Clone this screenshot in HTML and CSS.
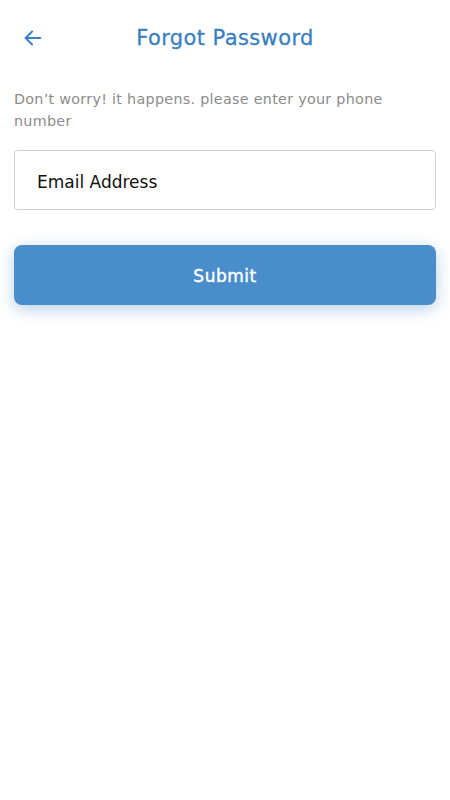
FILE: index.html
```html
<!DOCTYPE html>
<html lang="en">
<head>
    <meta charset="UTF-8">
    <title>Forgot Password</title>
    <meta name="viewport" content="width=device-width, initial-scale=1.0">
    <link rel="stylesheet" href="styles.css">
</head>
<body>
    <div class="screen">
        <header class="topbar">
            <a href="#" class="back">
                <svg width="22" height="22" viewBox="0 0 24 24" fill="none" stroke="#3b82c4" stroke-width="2.2" stroke-linecap="round" stroke-linejoin="round">
                    <path d="M20 12H4"/>
                    <path d="M11 5l-7 7 7 7"/>
                </svg>
            </a>
            <h1>Forgot Password</h1>
        </header>

        <p class="hint">Don’t worry! it happens. please enter your phone number</p>

        <form class="form">
            <input type="text" class="field" placeholder="Email Address">
            <button type="button" class="submit">Submit</button>
        </form>
    </div>
</body>
</html>
```

FILE: styles.css
```css
* {
    box-sizing: border-box;
}

body {
    background-color: #fff;
    color: #222;
    font-family: 'DejaVu Sans', sans-serif;
    margin: 0;
    padding: 0;
}

.screen {
    padding: 0 14px;
    min-height: 100vh;
}

.topbar {
    display: flex;
    align-items: center;
    justify-content: center;
    position: relative;
    height: 76px;
}

.back {
    position: absolute;
    left: 8px;
    top: 27px;
    display: flex;
}

.topbar h1 {
    margin: 0;
    font-size: 21px;
    font-weight: normal;
    color: #3a80c1;
    letter-spacing: 0.4px;
    -webkit-text-stroke: 0.3px #3a80c1;
}

.hint {
    margin: 12px 0 0;
    max-width: 400px;
    font-size: 14.3px;
    line-height: 22px;
    color: #8c8c8c;
    letter-spacing: 0.3px;
}

.form {
    display: flex;
    flex-direction: column;
    gap: 35px;
    margin-top: 18px;
}

.field {
    height: 60px;
    border: 1px solid #cfcfcf;
    border-radius: 4px;
    padding: 3px 22px 0;
    font-family: inherit;
    font-size: 17px;
    color: #111;
    outline: none;
}

.field::placeholder {
    color: #111;
}

.submit {
    height: 60px;
    border: none;
    border-radius: 8px;
    padding-top: 3px;
    background-color: #4a8dcb;
    color: #fff;
    font-family: inherit;
    font-size: 17px;
    font-weight: normal;
    letter-spacing: 0.5px;
    -webkit-text-stroke: 0.4px #fff;
    box-shadow: 0 4px 16px rgba(74, 141, 203, 0.4);
    cursor: pointer;
}
```
